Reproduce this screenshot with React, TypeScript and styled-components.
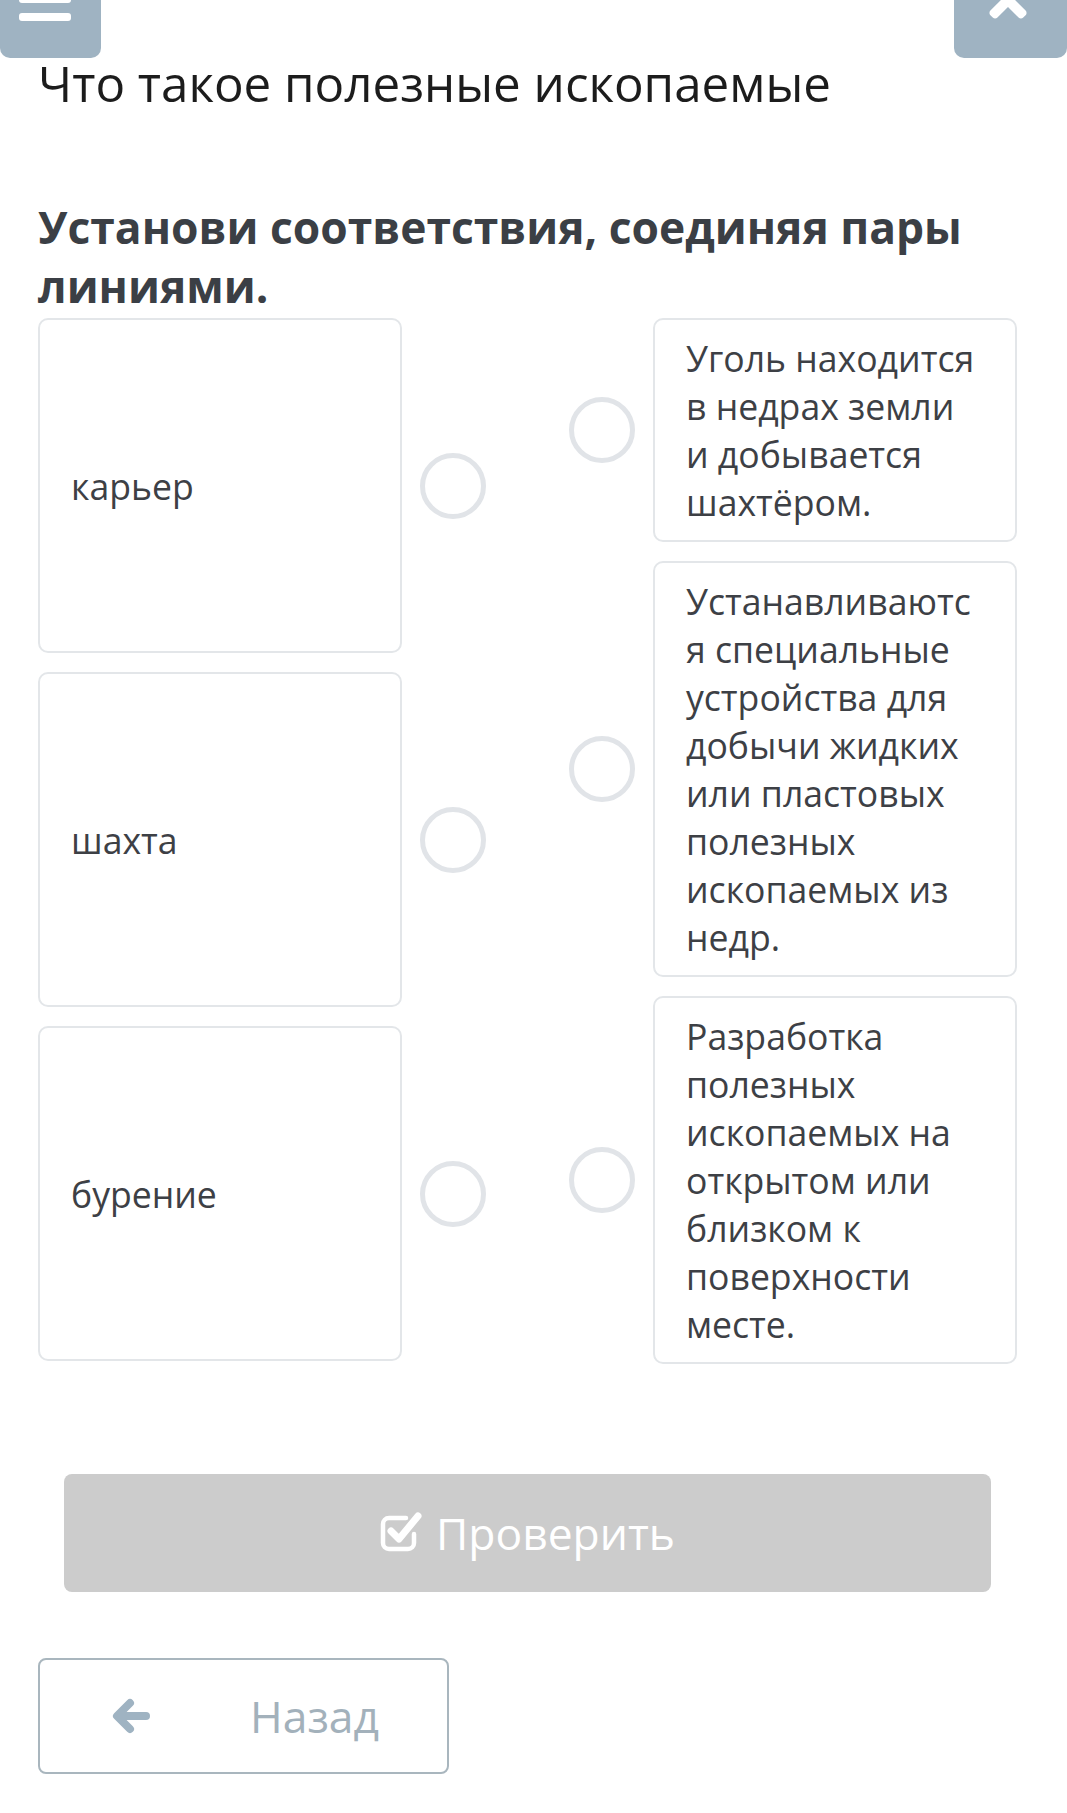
import { FC } from 'react'
import styled, { createGlobalStyle } from 'styled-components'
import { FaTimes } from 'react-icons/fa'

const GlobalStyle = createGlobalStyle`
  html, body { margin: 0; padding: 0; background: #fff; }
  body { overflow-x: hidden; font-family: 'Open Sans', 'Noto Sans', sans-serif; }
  * { box-sizing: border-box; }
`

const Page = styled.main`
  padding: 0 50px 40px 38px;
`

const TopBar = styled.div`
  display: flex;
  justify-content: space-between;
  margin: -58px -50px 0 -38px;
`

const TopButton = styled.div<{ $w: number }>`
  width: ${p => p.$w}px;
  height: 116px;
  background: #9fb3c2;
  border-radius: 10px;
  display: flex;
  align-items: center;
  justify-content: center;
  color: #fff;
`

const Burger = styled.div`
  display: flex;
  flex-direction: column;
  gap: 10px;
  margin: -2px 0 0 -12px;
  span {
    display: block;
    width: 52px;
    height: 8px;
    border-radius: 3px;
    background: #fff;
  }
`

const Title = styled.h1`
  margin: 0;
  font-size: 49.3px;
  line-height: 50px;
  font-weight: 400;
  color: #1c1c1c;
`

const Task = styled.h2`
  margin: 90px 0 2px;
  font-size: 44.4px;
  line-height: 59px;
  font-weight: 700;
  color: #3b3f45;
`

const Board = styled.div`
  display: flex;
  justify-content: space-between;
`

const Column = styled.div`
  display: flex;
  flex-direction: column;
  gap: 19px;
`

const Row = styled.div`
  display: flex;
  align-items: center;
  gap: 18px;
`

const Card = styled.div<{ $tall?: boolean }>`
  width: 364px;
  min-height: ${p => (p.$tall ? '335px' : '0')};
  display: flex;
  align-items: center;
  padding: 14px 30px 14px 31px;
  border: 2px solid #e3e6e9;
  border-radius: 10px;
  font-size: 35.6px;
  line-height: 48px;
  color: #3d4045;
  overflow-wrap: break-word;
  word-break: break-word;
`

const Dot = styled.div`
  width: 66px;
  height: 66px;
  flex: none;
  border: 5px solid #e1e4e8;
  border-radius: 50%;
`

const CheckButton = styled.div`
  margin: 110px 26px 0;
  height: 118px;
  border-radius: 8px;
  background: #cccccc;
  color: #fff;
  display: flex;
  align-items: center;
  justify-content: center;
  gap: 14px;
  font-size: 44.4px;
  svg { width: 42px; height: 44px; margin-top: -4px; }
`

const BackButton = styled.div`
  margin-top: 66px;
  width: 411px;
  height: 116px;
  border: 2px solid #a9b6be;
  border-radius: 8px;
  display: flex;
  align-items: center;
  gap: 98px;
  padding-left: 70px;
  font-size: 44.4px;
  color: #a3b1bb;
  svg { width: 42px; height: 42px; }
`

const CheckIcon: FC = () => (
  <svg viewBox="0 0 42 44" fill="none">
    <path
      d="M34 25v9a6 6 0 0 1-6 6H9a6 6 0 0 1-6-6V15a6 6 0 0 1 6-6h17"
      stroke="#fff"
      strokeWidth="4.5"
      strokeLinecap="round"
    />
    <path
      d="M11 22l8 8L38 7"
      stroke="#fff"
      strokeWidth="7"
      strokeLinecap="round"
      strokeLinejoin="round"
    />
  </svg>
)

const ArrowIcon: FC = () => (
  <svg viewBox="0 0 42 42" fill="none">
    <path
      d="M36 21H8M20 8L7 21l13 13"
      stroke="#9fb3c2"
      strokeWidth="8"
      strokeLinecap="round"
      strokeLinejoin="round"
    />
  </svg>
)

const leftItems = ['карьер', 'шахта', 'бурение']
const rightItems = [
  'Уголь находится в недрах земли и добывается шахтёром.',
  'Устанавливаются специальные устройства для добычи жидких или пластовых полезных ископаемых из недр.',
  'Разработка полезных ископаемых на открытом или близком к поверхности месте.',
]

const App: FC = () => {
  return (
    <>
      <GlobalStyle />
      <Page>
        <TopBar>
          <TopButton $w={101}>
            <Burger><span /><span /><span /></Burger>
          </TopButton>
          <TopButton $w={113}>
            <FaTimes size={54} style={{ marginLeft: -6 }} />
          </TopButton>
        </TopBar>
        <Title>Что такое полезные ископаемые</Title>
        <Task>Установи соответствия, соединяя пары линиями.</Task>
        <Board>
          <Column>
            {leftItems.map(t => (
              <Row key={t}>
                <Card $tall>{t}</Card>
                <Dot />
              </Row>
            ))}
          </Column>
          <Column>
            {rightItems.map(t => (
              <Row key={t}>
                <Dot />
                <Card>{t}</Card>
              </Row>
            ))}
          </Column>
        </Board>
        <CheckButton>
          <CheckIcon />
          <span>Проверить</span>
        </CheckButton>
        <BackButton>
          <ArrowIcon />
          <span>Назад</span>
        </BackButton>
      </Page>
    </>
  )
}

export default App
